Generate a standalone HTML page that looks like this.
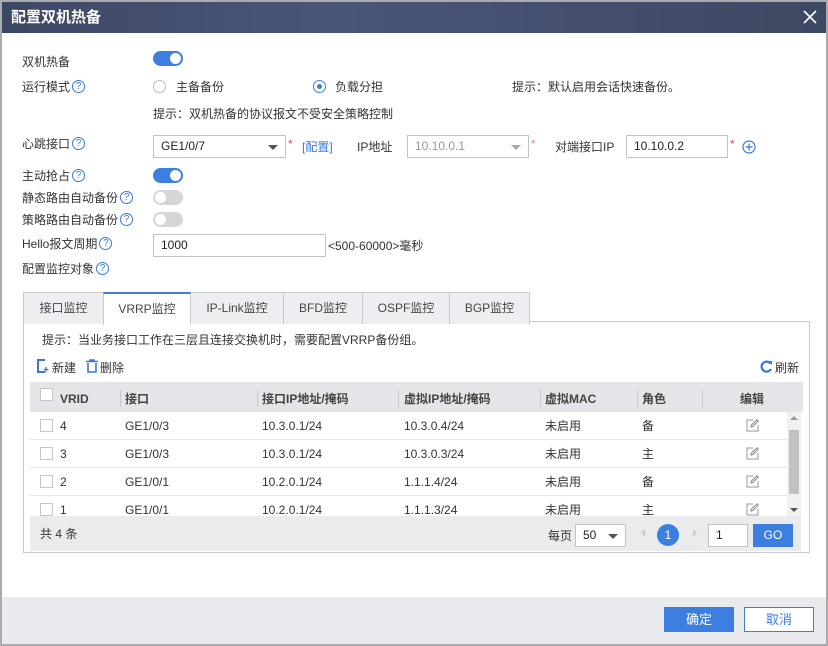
<!DOCTYPE html><html><head><meta charset="utf-8"><style>
*{box-sizing:border-box;margin:0;padding:0}
body{width:828px;height:646px;background:#a9abb0;font-family:"Liberation Sans","Noto Sans CJK SC",sans-serif;font-size:12px;line-height:16px;color:#333;position:relative;overflow:hidden}
.dlg{position:absolute;left:2px;top:2px;width:824px;height:642px;background:#fff}
.a{position:absolute;white-space:nowrap}
.title{left:0;top:0;width:824px;height:31px;background:linear-gradient(90deg,#3c4863,#4a5678 40%,#3d4862);color:#fff;font-size:15px;font-weight:bold;line-height:31px;padding-left:9px}
.q{display:inline-block;width:13px;height:13px;border:1px solid #3a78d8;border-radius:50%;color:#3a78d8;font-size:10px;line-height:11px;text-align:center;margin-left:2px;vertical-align:middle;position:relative;top:-1px}
.sw{position:absolute;width:30px;height:15px;border-radius:8px;background:#3d7fe0}
.sw:after{content:"";position:absolute;top:2px;right:2px;width:11px;height:11px;border-radius:50%;background:#fff}
.sw.off{background:#d4d6da}.sw.off:after{right:auto;left:2px}
.inp{position:absolute;height:23px;border:1px solid #bfc2c6;background:#fff;padding-left:7px;line-height:21px;font-size:12px}
.tri{position:absolute;right:7px;top:9px;border:5px solid transparent;border-top:5px solid #555;border-bottom:0}
.star{color:#e5484d}
.tab{position:absolute;top:290px;height:32px;border:1px solid #c8cacd;border-bottom:none;background:#eceef1;text-align:center;line-height:30px;font-size:12px;color:#444}
.th{position:absolute;top:382px;height:30px;line-height:30px;font-weight:bold;color:#444}
.cb{position:absolute;width:13px;height:13px;border:1px solid #c4c6ca;background:#fff}
.row{position:absolute;left:30px;width:757px;height:28px;border-bottom:1px solid #e3e4e6}
.c{position:absolute;top:6px}
.ed{position:absolute;left:716px;top:7px}
.btn{position:absolute;top:605px;width:70px;height:25px;text-align:center;line-height:23px;font-size:13px}
</style></head><body><div class="dlg">
<div class="a title">配置双机热备</div>
<svg class="a" style="right:9px;top:8px" width="14" height="14" viewBox="0 0 14 14"><path d="M1 1L13 13M13 1L1 13" stroke="#fff" stroke-width="1.6"/></svg>

<div class="a" style="left:20px;top:52px">双机热备</div>
<div class="sw" style="left:151px;top:49px"></div>
<div class="a" style="left:20px;top:77px">运行模式<span class="q">?</span></div>
<div class="a" style="left:151px;top:78px;width:13px;height:13px;border:1px solid #bbb;border-radius:50%"></div>
<div class="a" style="left:174px;top:77px">主备备份</div>
<div class="a" style="left:311px;top:78px;width:13px;height:13px;border:1px solid #3d7fe0;border-radius:50%"><div style="margin:3px;width:5px;height:5px;border-radius:50%;background:#3d7fe0"></div></div>
<div class="a" style="left:333px;top:77px">负载分担</div>
<div class="a" style="left:510px;top:77px">提示：默认启用会话快速备份。</div>
<div class="a" style="left:151px;top:104px">提示：双机热备的协议报文不受安全策略控制</div>

<div class="a" style="left:20px;top:134px">心跳接口<span class="q">?</span></div>
<div class="inp" style="left:151px;top:133px;width:133px;color:#222">GE1/0/7<span class="tri"></span></div>
<div class="a star" style="left:286px;top:134px">*</div>
<div class="a" style="left:300px;top:137px;color:#3a78d8">[配置]</div>
<div class="a" style="left:355px;top:137px">IP地址</div>
<div class="inp" style="left:405px;top:133px;width:122px;color:#999;background:#fff">10.10.0.1<span class="tri" style="border-top-color:#aaa"></span></div>
<div class="a star" style="left:529px;top:134px;color:#f08a8c">*</div>
<div class="a" style="left:553px;top:137px">对端接口IP</div>
<div class="inp" style="left:624px;top:133px;width:102px;color:#222">10.10.0.2</div>
<div class="a star" style="left:728px;top:134px">*</div>
<svg class="a" style="left:740px;top:138px" width="14" height="14" viewBox="0 0 14 14"><circle cx="7" cy="7" r="6" fill="none" stroke="#3a78d8" stroke-width="1.2"/><path d="M7 3.5V10.5M3.5 7H10.5" stroke="#3a78d8" stroke-width="1.2"/></svg>

<div class="a" style="left:20px;top:166px">主动抢占<span class="q">?</span></div>
<div class="sw" style="left:151px;top:166px"></div>
<div class="a" style="left:20px;top:188px">静态路由自动备份<span class="q">?</span></div>
<div class="sw off" style="left:151px;top:188px"></div>
<div class="a" style="left:20px;top:210px">策略路由自动备份<span class="q">?</span></div>
<div class="sw off" style="left:151px;top:210px"></div>
<div class="a" style="left:20px;top:234px">Hello报文周期<span class="q">?</span></div>
<div class="inp" style="left:151px;top:232px;width:173px;color:#222">1000</div>
<div class="a" style="left:326px;top:236px">&lt;500-60000&gt;毫秒</div>
<div class="a" style="left:20px;top:259px">配置监控对象<span class="q">?</span></div>

<div class="a" style="left:21px;top:319px;width:787px;height:232px;border:1px solid #c8cacd"></div>
<div class="tab" style="left:21px;width:81px">接口监控</div>
<div class="tab" style="left:101px;width:88px;background:#fff;border-top:2px solid #3d7fe0;height:33px;z-index:2">VRRP监控</div>
<div class="tab" style="left:188px;width:94px">IP-Link监控</div>
<div class="tab" style="left:281px;width:80px">BFD监控</div>
<div class="tab" style="left:360px;width:88px">OSPF监控</div>
<div class="tab" style="left:447px;width:81px">BGP监控</div>

<div class="a" style="left:40px;top:330px">提示：当业务接口工作在三层且连接交换机时，需要配置VRRP备份组。</div>
<svg class="a" style="left:35px;top:357px" width="13" height="14" viewBox="0 0 13 14"><path d="M8 1H1V13H8" fill="none" stroke="#3a78d8" stroke-width="2"/><path d="M9 8V13M6.5 10.5H11.5" stroke="#3a78d8" stroke-width="1.3"/></svg>
<div class="a" style="left:50px;top:358px">新建</div>
<svg class="a" style="left:84px;top:357px" width="12" height="14" viewBox="0 0 12 14"><path d="M0 2.5H12M4 2.5V1H8V2.5" fill="none" stroke="#3a78d8" stroke-width="1.5"/><path d="M2 4V13H10V4" fill="none" stroke="#3a78d8" stroke-width="1.6"/></svg>
<div class="a" style="left:98px;top:358px">删除</div>
<svg class="a" style="left:758px;top:358px" width="13" height="13" viewBox="0 0 13 13"><path d="M10.5 3.5A5 5 0 1 0 11 9" fill="none" stroke="#3a78d8" stroke-width="2.2"/><path d="M8 1L12 1L12 5Z" fill="#3a78d8"/></svg>
<div class="a" style="left:773px;top:358px">刷新</div>

<div class="a" style="left:28px;top:380px;width:773px;height:30px;background:#e4e5e8"></div>
<div class="cb" style="left:38px;top:386px"></div>
<div class="th" style="left:58px">VRID</div>
<div class="th" style="left:123px">接口</div>
<div class="th" style="left:260px">接口IP地址/掩码</div>
<div class="th" style="left:402px">虚拟IP地址/掩码</div>
<div class="th" style="left:543px">虚拟MAC</div>
<div class="th" style="left:640px">角色</div>
<div class="th" style="left:738px">编辑</div>
<div class="a" style="left:118px;top:388px;width:1px;height:17px;background:#c8c8c8"></div>
<div class="a" style="left:255px;top:388px;width:1px;height:17px;background:#c8c8c8"></div>
<div class="a" style="left:396px;top:388px;width:1px;height:17px;background:#c8c8c8"></div>
<div class="a" style="left:538px;top:388px;width:1px;height:17px;background:#c8c8c8"></div>
<div class="a" style="left:635px;top:388px;width:1px;height:17px;background:#c8c8c8"></div>
<div class="a" style="left:700px;top:388px;width:1px;height:17px;background:#c8c8c8"></div>

<div class="a" style="left:28px;top:410px;width:759px;height:104px;overflow:hidden">
<div class="row" style="left:0;top:0"><div class="cb" style="left:10px;top:7px"></div><span class="c" style="left:30px">4</span><span class="c" style="left:95px">GE1/0/3</span><span class="c" style="left:232px">10.3.0.1/24</span><span class="c" style="left:374px">10.3.0.4/24</span><span class="c" style="left:515px">未启用</span><span class="c" style="left:612px">备</span><svg class="ed" width="13" height="13" viewBox="0 0 13 13"><path d="M7 1H1V12H12V6" fill="none" stroke="#999"/><path d="M5 8L5.5 6L11 0.8L12.2 2L6.8 7.5Z" fill="none" stroke="#888"/></svg></div>
<div class="row" style="left:0;top:28px"><div class="cb" style="left:10px;top:7px"></div><span class="c" style="left:30px">3</span><span class="c" style="left:95px">GE1/0/3</span><span class="c" style="left:232px">10.3.0.1/24</span><span class="c" style="left:374px">10.3.0.3/24</span><span class="c" style="left:515px">未启用</span><span class="c" style="left:612px">主</span><svg class="ed" width="13" height="13" viewBox="0 0 13 13"><path d="M7 1H1V12H12V6" fill="none" stroke="#999"/><path d="M5 8L5.5 6L11 0.8L12.2 2L6.8 7.5Z" fill="none" stroke="#888"/></svg></div>
<div class="row" style="left:0;top:56px"><div class="cb" style="left:10px;top:7px"></div><span class="c" style="left:30px">2</span><span class="c" style="left:95px">GE1/0/1</span><span class="c" style="left:232px">10.2.0.1/24</span><span class="c" style="left:374px">1.1.1.4/24</span><span class="c" style="left:515px">未启用</span><span class="c" style="left:612px">备</span><svg class="ed" width="13" height="13" viewBox="0 0 13 13"><path d="M7 1H1V12H12V6" fill="none" stroke="#999"/><path d="M5 8L5.5 6L11 0.8L12.2 2L6.8 7.5Z" fill="none" stroke="#888"/></svg></div>
<div class="row" style="left:0;top:84px"><div class="cb" style="left:10px;top:7px"></div><span class="c" style="left:30px">1</span><span class="c" style="left:95px">GE1/0/1</span><span class="c" style="left:232px">10.2.0.1/24</span><span class="c" style="left:374px">1.1.1.3/24</span><span class="c" style="left:515px">未启用</span><span class="c" style="left:612px">主</span><svg class="ed" width="13" height="13" viewBox="0 0 13 13"><path d="M7 1H1V12H12V6" fill="none" stroke="#999"/><path d="M5 8L5.5 6L11 0.8L12.2 2L6.8 7.5Z" fill="none" stroke="#888"/></svg></div>
</div>
<div class="a" style="left:785px;top:410px;width:14px;height:104px;background:#f1f1f1"><div style="position:absolute;left:2px;top:18px;width:10px;height:64px;background:#c1c1c1"></div><div style="position:absolute;left:3px;top:4px;border:4px solid transparent;border-bottom:4px solid #999;border-top:0"></div><div style="position:absolute;left:3px;bottom:4px;border:4px solid transparent;border-top:4px solid #555;border-bottom:0"></div></div>

<div class="a" style="left:28px;top:514px;width:771px;height:35px;background:#eaebed"></div>
<div class="a" style="left:38px;top:524px">共 4 条</div>
<div class="a" style="left:546px;top:526px">每页</div>
<div class="inp" style="left:573px;top:522px;width:51px;color:#222">50<span class="tri"></span></div>
<div class="a" style="left:639px;top:527px;border:4px solid transparent;border-right:4px solid #ccc;border-left:0"></div>
<div class="a" style="left:655px;top:522px;width:22px;height:22px;border-radius:50%;background:#3d7fe0;color:#fff;text-align:center;line-height:22px">1</div>
<div class="a" style="left:691px;top:527px;border:4px solid transparent;border-left:4px solid #ccc;border-right:0"></div>
<div class="inp" style="left:706px;top:522px;width:40px;color:#222">1</div>
<div class="a" style="left:751px;top:522px;width:40px;height:23px;background:#3d7fe0;color:#fff;text-align:center;line-height:23px">GO</div>

<div class="a" style="left:0;top:595px;width:824px;height:47px;background:#e9eaed"></div>
<div class="btn" style="left:662px;background:#3d7fe0;color:#fff;border:1px solid #3d7fe0">确定</div>
<div class="btn" style="left:742px;background:#fff;color:#3d7fe0;border:1px solid #3d7fe0">取消</div>
</div></body></html>
